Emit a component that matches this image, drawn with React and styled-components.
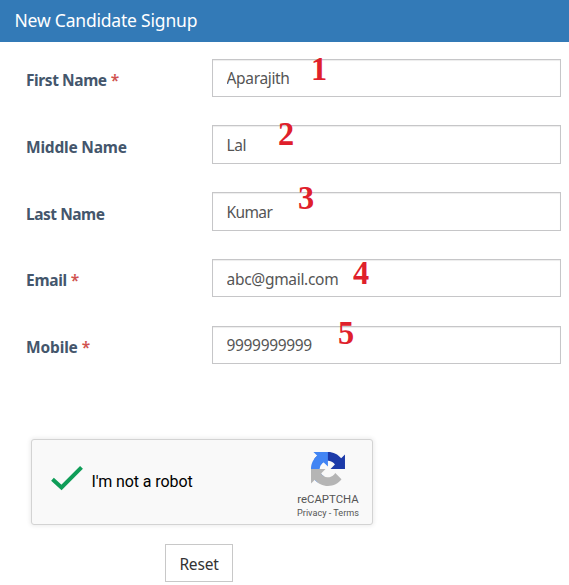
import React from "react";
import styled, { createGlobalStyle } from "styled-components";

const GlobalStyle = createGlobalStyle`
  * { box-sizing: border-box; }
  body {
    margin: 0;
    background: #fff;
    font-family: "Noto Sans", "Open Sans", sans-serif;
    overflow: hidden;
  }
`;

const Page = styled.main`
  width: 569px;
  height: 585px;
  background: #fff;
`;

const Header = styled.header`
  height: 42px;
  padding-left: 14.5px;
  background: #337ab7;
  color: #fff;
  font-size: 17.5px;
  line-height: 41px;
  letter-spacing: -0.2px;
  white-space: nowrap;
`;

const Form = styled.form`
  display: flex;
  flex-direction: column;
  padding-top: 16.7px;
`;

const Fields = styled.div`
  display: grid;
  grid-auto-rows: 66.75px;
`;

const Field = styled.div`
  display: grid;
  grid-template-columns: 186px 349px;
  align-items: start;
  padding-left: 26px;
`;

const Label = styled.label`
  padding-top: 1.5px;
  color: #44566c;
  font-size: 15.5px;
  font-weight: 700;
  line-height: 41px;
  letter-spacing: ${(p) => p.$tracking}px;
  white-space: nowrap;
`;

const Required = styled.span`
  margin-left: 4px;
  color: #d0524f;
  font-weight: 600;
`;

const Control = styled.div`
  position: relative;
`;

const Input = styled.input`
  display: block;
  width: 349px;
  height: 38.4px;
  padding: 1px 13.5px 0;
  border: 1px solid #c6c6c8;
  border-radius: 0;
  outline: none;
  background: #fff;
  box-shadow: inset 0 1px 1px rgba(0, 0, 0, 0.075);
  color: #555;
  font-family: inherit;
  font-size: 15.5px;
  letter-spacing: ${(p) => p.$tracking}px;
`;

const Marker = styled.span`
  position: absolute;
  left: ${(p) => p.$x}px;
  top: ${(p) => p.$y}px;
  color: #df202b;
  font: 700 34px/34px "Liberation Serif", serif;
  transform: scaleX(0.95);
  transform-origin: left;
`;

const Captcha = styled.section`
  display: flex;
  align-items: center;
  width: 342px;
  height: 86px;
  margin: 46.3px 0 0 31px;
  padding-left: 18px;
  border: 1px solid #d3d3d3;
  border-radius: 3px;
  background: #f9f9f9;
  box-shadow: 0 0 4px 1px rgba(0, 0, 0, 0.08);
  font-family: Roboto, sans-serif;
`;

const CheckIcon = styled.svg`
  width: 34px;
  height: 26px;
  margin-top: -8px;
`;

const CaptchaText = styled.span`
  width: 213px;
  padding-left: 7.5px;
  color: #000;
  font-size: 16px;
  line-height: 20px;
  letter-spacing: -0.1px;
`;

const Brand = styled.div`
  display: flex;
  flex-direction: column;
  align-items: center;
  width: 62px;
  margin-top: 8px;
  color: #555;
`;

const Logo = styled.svg`
  width: 34px;
  height: 34px;
`;

const BrandName = styled.div`
  margin-top: 6px;
  font-size: 11.4px;
  line-height: 15px;
`;

const BrandLinks = styled.div`
  font-size: 9.1px;
  line-height: 12px;
  white-space: nowrap;
`;

const ResetButton = styled.button`
  width: 68px;
  height: 38px;
  margin: 19px 0 0 165px;
  padding: 2px 0 0;
  border: 1px solid #c8c8c8;
  background: #fff;
  color: #333;
  font-family: inherit;
  font-size: 15.5px;
  letter-spacing: -0.2px;
`;

const fields = [
  { id: "first", label: "First Name", required: true, value: "Aparajith", x: 98.5, y: -7, lt: -0.42, vt: -0.33 },
  { id: "middle", label: "Middle Name", value: "Lal", x: 66, y: -8, lt: -0.2, vt: -0.4 },
  { id: "last", label: "Last Name", value: "Kumar", x: 86, y: -11, lt: -0.47, vt: -0.6 },
  { id: "email", label: "Email", required: true, value: "abc@gmail.com", x: 141, y: -3, lt: -0.3, vt: -0.3 },
  { id: "mobile", label: "Mobile", required: true, value: "9999999999", x: 126, y: -10, lt: -0.15, vt: -0.33 },
];

function FormField({ field, number }) {
  return (
    <Field>
      <Label htmlFor={field.id} $tracking={field.lt}>
        {field.label}
        {field.required && <Required>*</Required>}
      </Label>
      <Control>
        <Input id={field.id} defaultValue={field.value} $tracking={field.vt} />
        <Marker $x={field.x} $y={field.y}>{number}</Marker>
      </Control>
    </Field>
  );
}

function RecaptchaLogo() {
  return (
    <Logo viewBox="0 0 64 64">
      <path fill="#1c3aa9" d="M64 31.955l-.033-1.37V4.687l-7.16 7.16C50.948 4.674 42.033.093 32.05.093c-10.4 0-19.622 4.96-25.458 12.64l11.736 11.86a15.55 15.55 0 0 1 4.754-5.334c2.05-1.6 4.952-2.906 8.968-2.906.485 0 .86.057 1.135.163 4.976.393 9.288 3.14 11.828 7.124l-8.307 8.307z" />
      <path fill="#4285f4" d="M31.862.094l-1.37.033H4.594l7.16 7.16C4.58 13.147 0 22.06 0 32.046c0 10.4 4.96 19.622 12.64 25.458L24.5 45.768a15.55 15.55 0 0 1-5.334-4.754c-1.6-2.05-2.906-4.952-2.906-8.968 0-.485.057-.86.163-1.135.393-4.976 3.14-9.288 7.124-11.828l8.307 8.307z" />
      <path fill="#b5b5b5" d="M.001 32.045l.033 1.37v25.898l7.16-7.16c5.86 7.173 14.774 11.754 24.76 11.754 10.4 0 19.622-4.96 25.458-12.64l-11.736-11.86a15.55 15.55 0 0 1-4.754 5.334c-2.05 1.6-4.952 2.906-8.968 2.906-.485 0-.86-.057-1.135-.163-4.976-.393-9.288-3.14-11.828-7.124l8.307-8.307z" />
    </Logo>
  );
}

export default function App() {
  return (
    <Page>
      <GlobalStyle />
      <Header>New Candidate Signup</Header>
      <Form>
        <Fields>
          {fields.map((field, i) => (
            <FormField key={field.id} field={field} number={i + 1} />
          ))}
        </Fields>
        <Captcha>
          <CheckIcon viewBox="0 0 34 26">
            <path d="M2.5 14.2 L11.5 22.4 L31.5 2.3" fill="none" stroke="#0f9d58" strokeWidth="4" />
          </CheckIcon>
          <CaptchaText>I'm not a robot</CaptchaText>
          <Brand>
            <RecaptchaLogo />
            <BrandName>reCAPTCHA</BrandName>
            <BrandLinks>Privacy - Terms</BrandLinks>
          </Brand>
        </Captcha>
        <ResetButton type="reset">Reset</ResetButton>
      </Form>
    </Page>
  );
}
